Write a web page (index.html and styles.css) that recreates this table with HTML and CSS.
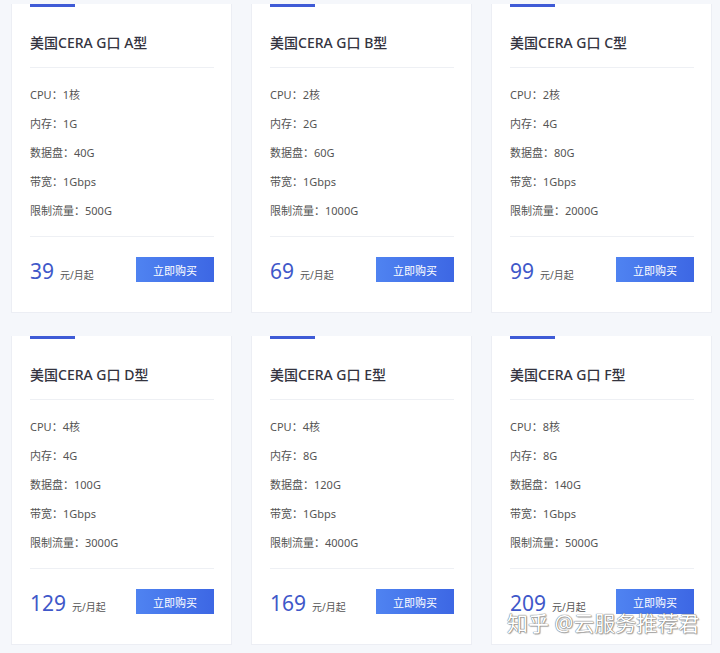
FILE: index.html
```html
<!DOCTYPE html>
<html lang="zh-CN">
<head>
  <meta charset="UTF-8">
  <meta name="viewport" content="width=device-width, initial-scale=1.0">
  <title>美国CERA G口服务器</title>
  <link rel="stylesheet" href="styles.css">
</head>
<body>
  <main class="plans">
    <div class="card">
      <h3>美国CERA G口 A型</h3>
      <ul class="specs">
        <li>CPU：1核</li>
        <li>内存：1G</li>
        <li>数据盘：40G</li>
        <li>带宽：1Gbps</li>
        <li>限制流量：500G</li>
      </ul>
      <div class="foot">
        <div class="price"><span class="num">39</span><span class="unit">元/月起</span></div>
        <button class="buy">立即购买</button>
      </div>
    </div>
    <div class="card">
      <h3>美国CERA G口 B型</h3>
      <ul class="specs">
        <li>CPU：2核</li>
        <li>内存：2G</li>
        <li>数据盘：60G</li>
        <li>带宽：1Gbps</li>
        <li>限制流量：1000G</li>
      </ul>
      <div class="foot">
        <div class="price"><span class="num">69</span><span class="unit">元/月起</span></div>
        <button class="buy">立即购买</button>
      </div>
    </div>
    <div class="card">
      <h3>美国CERA G口 C型</h3>
      <ul class="specs">
        <li>CPU：2核</li>
        <li>内存：4G</li>
        <li>数据盘：80G</li>
        <li>带宽：1Gbps</li>
        <li>限制流量：2000G</li>
      </ul>
      <div class="foot">
        <div class="price"><span class="num">99</span><span class="unit">元/月起</span></div>
        <button class="buy">立即购买</button>
      </div>
    </div>
    <div class="card">
      <h3>美国CERA G口 D型</h3>
      <ul class="specs">
        <li>CPU：4核</li>
        <li>内存：4G</li>
        <li>数据盘：100G</li>
        <li>带宽：1Gbps</li>
        <li>限制流量：3000G</li>
      </ul>
      <div class="foot">
        <div class="price"><span class="num">129</span><span class="unit">元/月起</span></div>
        <button class="buy">立即购买</button>
      </div>
    </div>
    <div class="card">
      <h3>美国CERA G口 E型</h3>
      <ul class="specs">
        <li>CPU：4核</li>
        <li>内存：8G</li>
        <li>数据盘：120G</li>
        <li>带宽：1Gbps</li>
        <li>限制流量：4000G</li>
      </ul>
      <div class="foot">
        <div class="price"><span class="num">169</span><span class="unit">元/月起</span></div>
        <button class="buy">立即购买</button>
      </div>
    </div>
    <div class="card">
      <h3>美国CERA G口 F型</h3>
      <ul class="specs">
        <li>CPU：8核</li>
        <li>内存：8G</li>
        <li>数据盘：140G</li>
        <li>带宽：1Gbps</li>
        <li>限制流量：5000G</li>
      </ul>
      <div class="foot">
        <div class="price"><span class="num">209</span><span class="unit">元/月起</span></div>
        <button class="buy">立即购买</button>
      </div>
    </div>
  </main>
  <div class="watermark">知乎 @云服务推荐君</div>
</body>
</html>
```

FILE: styles.css
```css
body {
  margin: 0;
  background: #f5f7fb;
  font-family: "Noto Sans", "Noto Sans CJK SC", sans-serif;
  color: #333;
  height: 653px;
  overflow: hidden;
}
.plans {
  display: grid;
  grid-template-columns: repeat(3, 221px);
  gap: 23px 19px;
  padding: 4px 0 0 11px;
}
.card {
  background: #fff;
  border: 1px solid #eceef4;
  border-top: none;
  height: 309px;
  box-sizing: border-box;
  padding: 0 17px 0 18px;
}
.card::before {
  content: "";
  display: block;
  width: 45px;
  height: 3px;
  background: #3f5bd6;
}
.card h3 {
  margin: 26px 0 0;
  padding-bottom: 14px;
  border-bottom: 1px solid #eef0f4;
  font-size: 14px;
  line-height: 20px;
  font-weight: 500;
  color: #34343f;
}
.specs {
  list-style: none;
  margin: 12px 0 0;
  padding: 0 0 11px;
  border-bottom: 1px solid #eef0f4;
}
.specs li {
  font-size: 11px;
  line-height: 29px;
  color: #555;
}
.foot {
  display: flex;
  justify-content: space-between;
  align-items: flex-start;
  margin-top: 20px;
}
.price {
  display: flex;
  align-items: baseline;
  gap: 6px;
  padding-top: 2px;
}
.num {
  font-size: 21px;
  color: #3f58c9;
  line-height: 25px;
}
.unit {
  font-size: 10px;
  color: #555;
}
.buy {
  width: 78px;
  height: 25px;
  border: none;
  background: linear-gradient(90deg, #4f83f1, #3d67e4);
  color: #fff;
  font-family: inherit;
  font-size: 11px;
  padding: 0;
}
.watermark {
  position: absolute;
  left: 507px;
  top: 607px;
  font-size: 21px;
  color: #fff;
  text-shadow: 0 0 1px #666, 0 0 1px #666, 1px 1px 1px rgba(0, 0, 0, 0.3);
}
```
